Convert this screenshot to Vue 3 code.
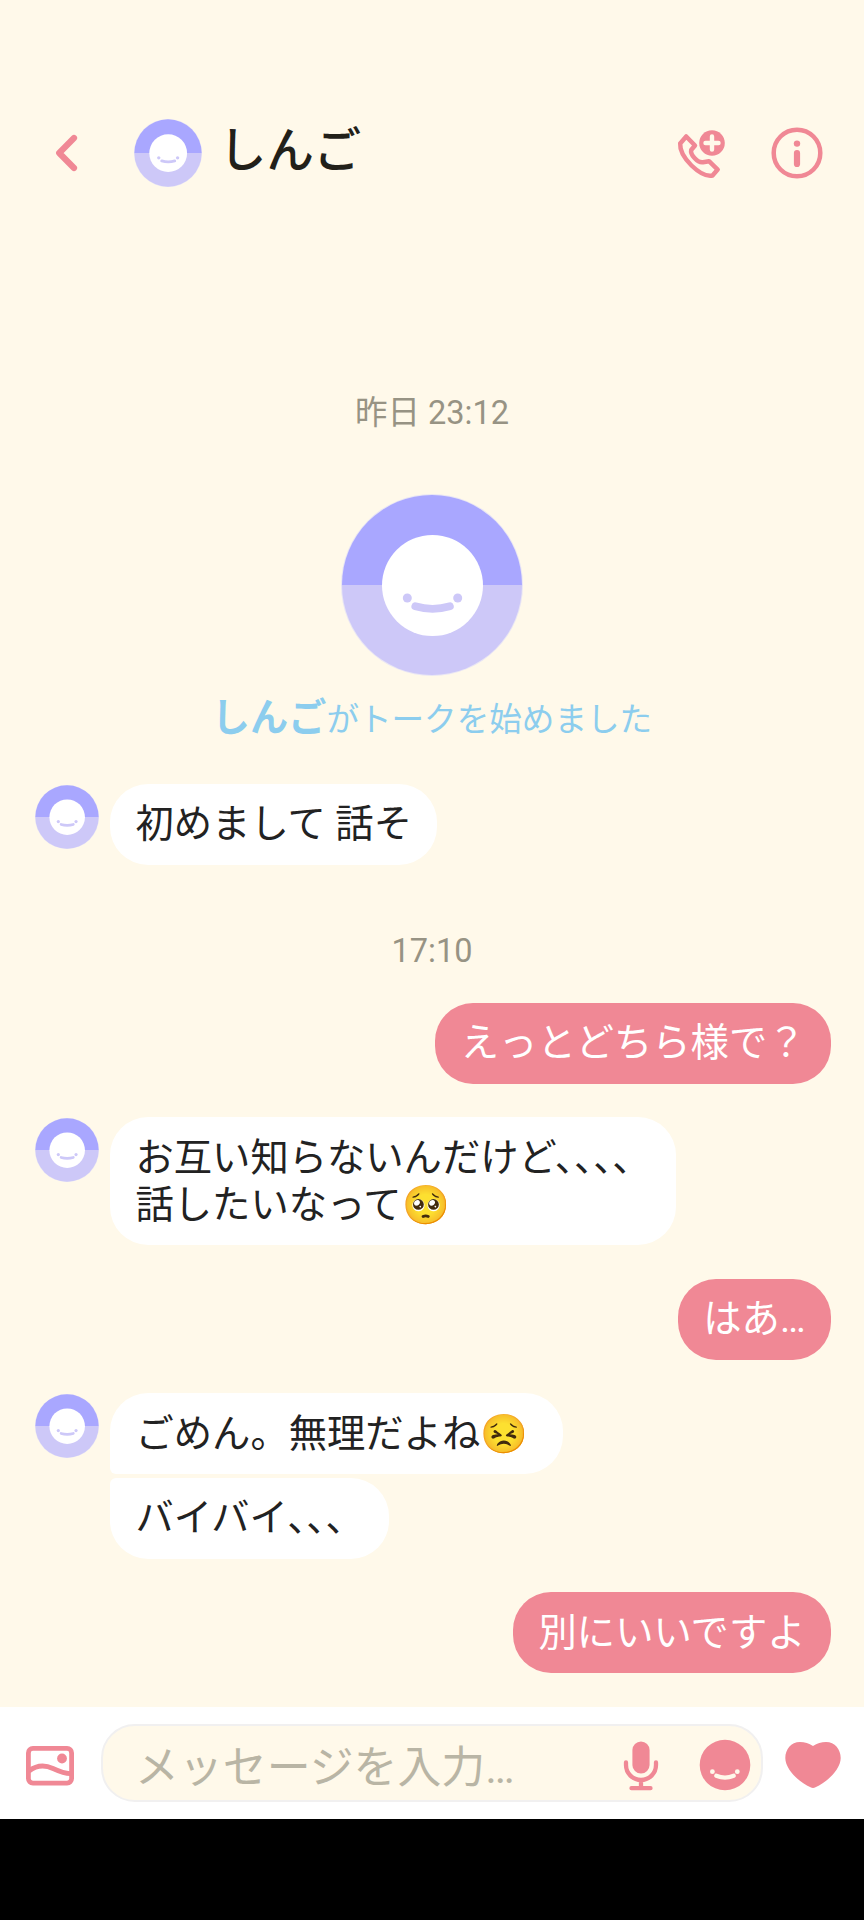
<script setup>
import { h } from 'vue'

const Avatar = () =>
  h('svg', { viewBox: '0 0 182 182', width: '100%', height: '100%', style: { display: 'block' } }, [
    h('circle', { cx: 91, cy: 91, r: 91, fill: '#e9e6f4' }),
    h('path', { d: 'M1 91a90 90 0 0 1 180 0z', fill: '#a9a7ff' }),
    h('path', { d: 'M1 91a90 90 0 0 0 180 0z', fill: '#cdc8f8' }),
    h('circle', { cx: 91.5, cy: 91.5, r: 50.5, fill: '#fff' }),
    h('circle', { cx: 66.3, cy: 104, r: 4.5, fill: '#cdc8f8' }),
    h('circle', { cx: 116.7, cy: 104, r: 4.5, fill: '#cdc8f8' }),
    h('path', { d: 'M74.3 112.3q17.3 5 34.600 0', fill: 'none', stroke: '#cdc8f8', 'stroke-width': 7.8, 'stroke-linecap': 'round' }),
  ])

const groups = [
  { kind: 'in', cls: 'first', items: ['初めまして 話そ'] },
  { kind: 'time', text: '17:10' },
  { kind: 'out', items: ['えっとどちら様で？'] },
  { kind: 'in', items: ['お互い知らないんだけど、、、、\n話したいなって🥺'] },
  { kind: 'out', items: ['はあ…'] },
  { kind: 'in', cls: 'pair', items: ['ごめん。無理だよね😣', 'バイバイ、、、'] },
  { kind: 'out', items: ['別にいいですよ'] },
]
</script>

<template>
  <div class="screen">
    <header class="header">
      <svg class="back" width="26" height="40" viewBox="0 0 26 40">
        <path d="M21 5L6.200 20L21 35" fill="none" stroke="#f08895" stroke-width="6.200" stroke-linecap="round" stroke-linejoin="round" />
      </svg>
      <div class="head-avatar"><Avatar /></div>
      <h1 class="name">しんご</h1>
      <svg class="call" width="54" height="54" viewBox="0 0 54 54">
        <path d="M14.200 10.500L23 19.500L19.200 24Q18.300 27.500 22.500 32Q26.800 36.800 31 36.200L37 35.200L45.700 43.600L40.500 49.500Q32 51.500 19.500 39.500Q7.500 27.500 8.200 17.500Z" fill="none" stroke="#f08895" stroke-width="4.500" stroke-linejoin="round" />
        <circle cx="40" cy="17" r="12.800" fill="#f08895" />
        <path d="M33.500 17h13M40 10.500v13" stroke="#fff9ea" stroke-width="4.400" stroke-linecap="round" />
      </svg>
      <svg class="info" width="52" height="52" viewBox="0 0 52 52">
        <circle cx="26" cy="26" r="23.300" fill="none" stroke="#f08895" stroke-width="4.500" />
        <circle cx="26" cy="16.600" r="3.200" fill="#f08895" />
        <path d="M26 26v11" stroke="#f08895" stroke-width="6.200" stroke-linecap="round" />
      </svg>
    </header>

    <main class="chat">
      <div class="time">昨日 23:12</div>
      <div class="big-avatar"><Avatar /></div>
      <p class="started"><b>しんご</b>がトークを始めました</p>
      <template v-for="(g, i) in groups" :key="i">
        <div v-if="g.kind === 'time'" class="time second">{{ g.text }}</div>
        <div v-else class="row" :class="[g.kind, g.cls]">
          <div v-if="g.kind === 'in'" class="small-avatar"><Avatar /></div>
          <div class="stack">
            <div v-for="t in g.items" :key="t" class="bubble">{{ t }}</div>
          </div>
        </div>
      </template>
    </main>

    <footer class="bar">
      <svg class="photo" width="48" height="40" viewBox="0 0 48 40">
        <rect x="2.400" y="2.400" width="43.200" height="34.700" rx="4.500" fill="none" stroke="#f08895" stroke-width="4.800" />
        <path d="M3 25Q14 16.500 27 22.500T46 27.500" fill="none" stroke="#f08895" stroke-width="4.800" />
        <circle cx="36" cy="12.500" r="4.900" fill="#f08895" />
      </svg>
      <div class="field">
        <span class="placeholder">メッセージを入力…</span>
        <svg class="mic" width="36" height="50" viewBox="0 0 36 50">
          <rect x="9.400" y="0.500" width="17.200" height="32" rx="8.600" fill="#f08895" />
          <path d="M3 21.500v2.500a15 15 0 0 0 30 0v-2.500M18 39v7.500M8.500 47.200h19" fill="none" stroke="#f08895" stroke-width="4.300" stroke-linecap="round" />
        </svg>
        <svg class="smile" width="52" height="52" viewBox="0 0 52 52">
          <circle cx="26" cy="26" r="25.300" fill="#f08895" />
          <circle cx="13.400" cy="32.700" r="2.400" fill="#fff9ea" />
          <circle cx="38.300" cy="32.700" r="2.400" fill="#fff9ea" />
          <path d="M17.300 36.800q8.700 3.600 17.400 0" fill="none" stroke="#fff9ea" stroke-width="4.200" stroke-linecap="round" />
        </svg>
      </div>
      <svg class="heart" width="56" height="48" viewBox="0 0 56 48">
        <path d="M28 5Q34 1 41 1C50 1 55.700 8.500 55.700 17C55.700 28 42.500 41 30.500 46.300Q28 47.600 25.500 46.300C13.500 41 0.300 28 0.300 17C0.300 8.500 6 1 15 1Q22 1 28 5Z" fill="#f08895" />
      </svg>
    </footer>
    <div class="nav"></div>
  </div>
</template>

<style>
body {
  background: #fff9ea;
}
</style>

<style scoped>
.screen {
  width: 864px;
  height: 1920px;
  display: flex;
  flex-direction: column;
  overflow: hidden;
  background: #fff9ea;
  color: #222;
  font-family: Roboto, "Noto Sans CJK JP", sans-serif;
}
.header {
  height: 106px;
  padding: 100px 41px 0 53px;
  display: flex;
  align-items: center;
  flex: none;
}
.head-avatar {
  width: 68px;
  height: 68px;
  margin-left: 55px;
}
.name {
  margin: 0 0 4px 17px;
  font-size: 47.4px;
  line-height: 60px;
  font-weight: 500;
  color: #222019;
  flex: 1;
}
.info {
  margin-left: 45px;
}
.chat {
  flex: 1;
  display: flex;
  flex-direction: column;
  padding-top: 187px;
}
.time {
  height: 40px;
  line-height: 40px;
  text-align: center;
  font-size: 32.5px;
  color: #979384;
}
.time.second {
  margin: 66px 0 32px;
}
.big-avatar {
  width: 182px;
  height: 182px;
  margin: 61px auto 0;
}
.started {
  margin: 17px 0 0;
  height: 50px;
  line-height: 50px;
  text-align: center;
  font-size: 32.6px;
  color: #8ccdee;
}
.started b {
  font-size: 38.2px;
}
.row {
  display: flex;
  align-items: flex-start;
  margin-top: 33.5px;
}
.row.first {
  margin-top: 41px;
}
.time.second + .row {
  margin-top: 0;
}
.in {
  padding-left: 35px;
}
.out {
  justify-content: flex-end;
  padding-right: 33px;
}
.small-avatar {
  width: 64px;
  height: 64px;
  margin: 1px 11px 0 0;
}
.stack {
  display: flex;
  flex-direction: column;
  align-items: flex-start;
  gap: 3.5px;
}
.bubble {
  padding: 16.3px 25.5px 17.7px;
  border-radius: 38px;
  background: #fff;
  font-size: 38.3px;
  line-height: 47px;
  white-space: pre;
}
.first .bubble {
  padding: 15.800px 25.5px 18.200px;
}
.out .bubble {
  background: #f08895;
  color: #fff;
}
.pair .bubble:first-child {
  padding-right: 34.500px;
  border-bottom-left-radius: 6px;
}
.pair .bubble:last-child {
  border-top-left-radius: 6px;
}
.bar {
  flex: none;
  height: 112px;
  background: #fff;
  display: flex;
  align-items: center;
  padding: 0 23px 0 26px;
  box-sizing: border-box;
}
.photo {
  margin-top: 5px;
}
.field {
  width: 662px;
  height: 78px;
  margin-left: 27px;
  margin-right: 22px;
  box-sizing: border-box;
  border: 2px solid #f1f0f0;
  border-radius: 34px;
  background: #fff9ea;
  display: flex;
  align-items: center;
  padding: 0 10px 0 32px;
}
.placeholder {
  flex: 1;
  margin-top: 10px;
  font-size: 43.9px;
  line-height: 60px;
  color: #b9b5a5;
}
.mic {
  margin: 6px 40px 0 0;
}
.smile {
  margin-top: 4px;
}
.heart {
  margin-top: 3px;
}
.nav {
  flex: none;
  height: 101px;
  background: #000;
}
</style>
